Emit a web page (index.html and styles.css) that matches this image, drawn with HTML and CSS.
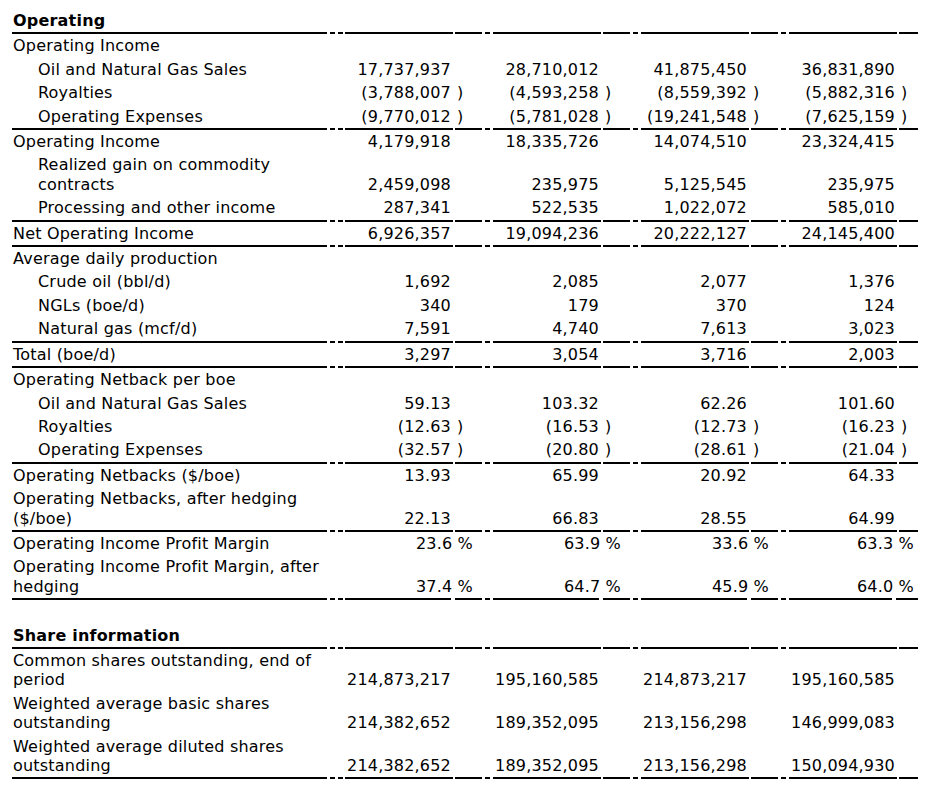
FILE: index.html
```html
<!DOCTYPE html>
<html lang="en">
<head>
<meta charset="utf-8">
<title>Operating summary</title>
<link rel="stylesheet" href="styles.css">
</head>
<body>
<table class="fin">
  <colgroup>
    <col class="c-lbl">
    <col class="c-sp1"><col class="c-num"><col class="c-par">
    <col class="c-sp"><col class="c-num"><col class="c-par">
    <col class="c-sp"><col class="c-num"><col class="c-par">
    <col class="c-sp"><col class="c-num"><col class="c-par4">
  </colgroup>
  <tbody>
    <tr class="rule">
      <td class="lbl head">Operating</td>
      <td class="sp"></td><td class="num"></td><td class="par"></td>
      <td class="sp"></td><td class="num"></td><td class="par"></td>
      <td class="sp"></td><td class="num"></td><td class="par"></td>
      <td class="sp"></td><td class="num"></td><td class="par"></td>
    </tr>
    <tr>
      <td class="lbl">Operating Income</td>
      <td class="sp"></td><td class="num"></td><td class="par"></td>
      <td class="sp"></td><td class="num"></td><td class="par"></td>
      <td class="sp"></td><td class="num"></td><td class="par"></td>
      <td class="sp"></td><td class="num"></td><td class="par"></td>
    </tr>
    <tr>
      <td class="lbl ind">Oil and Natural Gas Sales</td>
      <td class="sp"></td><td class="num">17,737,937</td><td class="par"></td>
      <td class="sp"></td><td class="num">28,710,012</td><td class="par"></td>
      <td class="sp"></td><td class="num">41,875,450</td><td class="par"></td>
      <td class="sp"></td><td class="num">36,831,890</td><td class="par"></td>
    </tr>
    <tr>
      <td class="lbl ind">Royalties</td>
      <td class="sp"></td><td class="num">(3,788,007</td><td class="par">)</td>
      <td class="sp"></td><td class="num">(4,593,258</td><td class="par">)</td>
      <td class="sp"></td><td class="num">(8,559,392</td><td class="par">)</td>
      <td class="sp"></td><td class="num">(5,882,316</td><td class="par">)</td>
    </tr>
    <tr class="rule">
      <td class="lbl ind">Operating Expenses</td>
      <td class="sp"></td><td class="num">(9,770,012</td><td class="par">)</td>
      <td class="sp"></td><td class="num">(5,781,028</td><td class="par">)</td>
      <td class="sp"></td><td class="num">(19,241,548</td><td class="par">)</td>
      <td class="sp"></td><td class="num">(7,625,159</td><td class="par">)</td>
    </tr>
    <tr>
      <td class="lbl">Operating Income</td>
      <td class="sp"></td><td class="num">4,179,918</td><td class="par"></td>
      <td class="sp"></td><td class="num">18,335,726</td><td class="par"></td>
      <td class="sp"></td><td class="num">14,074,510</td><td class="par"></td>
      <td class="sp"></td><td class="num">23,324,415</td><td class="par"></td>
    </tr>
    <tr>
      <td class="lbl ind">Realized gain on commodity contracts</td>
      <td class="sp"></td><td class="num">2,459,098</td><td class="par"></td>
      <td class="sp"></td><td class="num">235,975</td><td class="par"></td>
      <td class="sp"></td><td class="num">5,125,545</td><td class="par"></td>
      <td class="sp"></td><td class="num">235,975</td><td class="par"></td>
    </tr>
    <tr class="rule">
      <td class="lbl ind">Processing and other income</td>
      <td class="sp"></td><td class="num">287,341</td><td class="par"></td>
      <td class="sp"></td><td class="num">522,535</td><td class="par"></td>
      <td class="sp"></td><td class="num">1,022,072</td><td class="par"></td>
      <td class="sp"></td><td class="num">585,010</td><td class="par"></td>
    </tr>
    <tr class="rule">
      <td class="lbl">Net Operating Income</td>
      <td class="sp"></td><td class="num">6,926,357</td><td class="par"></td>
      <td class="sp"></td><td class="num">19,094,236</td><td class="par"></td>
      <td class="sp"></td><td class="num">20,222,127</td><td class="par"></td>
      <td class="sp"></td><td class="num">24,145,400</td><td class="par"></td>
    </tr>
    <tr>
      <td class="lbl">Average daily production</td>
      <td class="sp"></td><td class="num"></td><td class="par"></td>
      <td class="sp"></td><td class="num"></td><td class="par"></td>
      <td class="sp"></td><td class="num"></td><td class="par"></td>
      <td class="sp"></td><td class="num"></td><td class="par"></td>
    </tr>
    <tr>
      <td class="lbl ind">Crude oil (bbl/d)</td>
      <td class="sp"></td><td class="num">1,692</td><td class="par"></td>
      <td class="sp"></td><td class="num">2,085</td><td class="par"></td>
      <td class="sp"></td><td class="num">2,077</td><td class="par"></td>
      <td class="sp"></td><td class="num">1,376</td><td class="par"></td>
    </tr>
    <tr>
      <td class="lbl ind">NGLs (boe/d)</td>
      <td class="sp"></td><td class="num">340</td><td class="par"></td>
      <td class="sp"></td><td class="num">179</td><td class="par"></td>
      <td class="sp"></td><td class="num">370</td><td class="par"></td>
      <td class="sp"></td><td class="num">124</td><td class="par"></td>
    </tr>
    <tr class="rule">
      <td class="lbl ind">Natural gas (mcf/d)</td>
      <td class="sp"></td><td class="num">7,591</td><td class="par"></td>
      <td class="sp"></td><td class="num">4,740</td><td class="par"></td>
      <td class="sp"></td><td class="num">7,613</td><td class="par"></td>
      <td class="sp"></td><td class="num">3,023</td><td class="par"></td>
    </tr>
    <tr class="rule">
      <td class="lbl">Total (boe/d)</td>
      <td class="sp"></td><td class="num">3,297</td><td class="par"></td>
      <td class="sp"></td><td class="num">3,054</td><td class="par"></td>
      <td class="sp"></td><td class="num">3,716</td><td class="par"></td>
      <td class="sp"></td><td class="num">2,003</td><td class="par"></td>
    </tr>
    <tr>
      <td class="lbl">Operating Netback per boe</td>
      <td class="sp"></td><td class="num"></td><td class="par"></td>
      <td class="sp"></td><td class="num"></td><td class="par"></td>
      <td class="sp"></td><td class="num"></td><td class="par"></td>
      <td class="sp"></td><td class="num"></td><td class="par"></td>
    </tr>
    <tr>
      <td class="lbl ind">Oil and Natural Gas Sales</td>
      <td class="sp"></td><td class="num">59.13</td><td class="par"></td>
      <td class="sp"></td><td class="num">103.32</td><td class="par"></td>
      <td class="sp"></td><td class="num">62.26</td><td class="par"></td>
      <td class="sp"></td><td class="num">101.60</td><td class="par"></td>
    </tr>
    <tr>
      <td class="lbl ind">Royalties</td>
      <td class="sp"></td><td class="num">(12.63</td><td class="par">)</td>
      <td class="sp"></td><td class="num">(16.53</td><td class="par">)</td>
      <td class="sp"></td><td class="num">(12.73</td><td class="par">)</td>
      <td class="sp"></td><td class="num">(16.23</td><td class="par">)</td>
    </tr>
    <tr class="rule">
      <td class="lbl ind">Operating Expenses</td>
      <td class="sp"></td><td class="num">(32.57</td><td class="par">)</td>
      <td class="sp"></td><td class="num">(20.80</td><td class="par">)</td>
      <td class="sp"></td><td class="num">(28.61</td><td class="par">)</td>
      <td class="sp"></td><td class="num">(21.04</td><td class="par">)</td>
    </tr>
    <tr>
      <td class="lbl">Operating Netbacks ($/boe)</td>
      <td class="sp"></td><td class="num">13.93</td><td class="par"></td>
      <td class="sp"></td><td class="num">65.99</td><td class="par"></td>
      <td class="sp"></td><td class="num">20.92</td><td class="par"></td>
      <td class="sp"></td><td class="num">64.33</td><td class="par"></td>
    </tr>
    <tr class="rule">
      <td class="lbl">Operating Netbacks, after hedging ($/boe)</td>
      <td class="sp"></td><td class="num">22.13</td><td class="par"></td>
      <td class="sp"></td><td class="num">66.83</td><td class="par"></td>
      <td class="sp"></td><td class="num">28.55</td><td class="par"></td>
      <td class="sp"></td><td class="num">64.99</td><td class="par"></td>
    </tr>
    <tr>
      <td class="lbl">Operating Income Profit Margin</td>
      <td class="sp"></td><td class="pct" colspan="2">23.6 %</td>
      <td class="sp"></td><td class="pct" colspan="2">63.9 %</td>
      <td class="sp"></td><td class="pct" colspan="2">33.6 %</td>
      <td class="sp"></td><td class="pct" colspan="2">63.3 %</td>
    </tr>
    <tr class="rule">
      <td class="lbl">Operating Income Profit Margin, after hedging</td>
      <td class="sp"></td><td class="pct" colspan="2">37.4 %</td>
      <td class="sp"></td><td class="pct" colspan="2">64.7 %</td>
      <td class="sp"></td><td class="pct" colspan="2">45.9 %</td>
      <td class="sp"></td><td class="pct" colspan="2">64.0 %</td>
    </tr>
    <tr class="blank">
      <td class="lbl">&nbsp;</td>
      <td class="sp"></td><td class="num"></td><td class="par"></td>
      <td class="sp"></td><td class="num"></td><td class="par"></td>
      <td class="sp"></td><td class="num"></td><td class="par"></td>
      <td class="sp"></td><td class="num"></td><td class="par"></td>
    </tr>
    <tr class="rule">
      <td class="lbl head">Share information</td>
      <td class="sp"></td><td class="num"></td><td class="par"></td>
      <td class="sp"></td><td class="num"></td><td class="par"></td>
      <td class="sp"></td><td class="num"></td><td class="par"></td>
      <td class="sp"></td><td class="num"></td><td class="par"></td>
    </tr>
    <tr>
      <td class="lbl">Common shares outstanding, end of period</td>
      <td class="sp"></td><td class="num">214,873,217</td><td class="par"></td>
      <td class="sp"></td><td class="num">195,160,585</td><td class="par"></td>
      <td class="sp"></td><td class="num">214,873,217</td><td class="par"></td>
      <td class="sp"></td><td class="num">195,160,585</td><td class="par"></td>
    </tr>
    <tr>
      <td class="lbl">Weighted average basic shares outstanding</td>
      <td class="sp"></td><td class="num">214,382,652</td><td class="par"></td>
      <td class="sp"></td><td class="num">189,352,095</td><td class="par"></td>
      <td class="sp"></td><td class="num">213,156,298</td><td class="par"></td>
      <td class="sp"></td><td class="num">146,999,083</td><td class="par"></td>
    </tr>
    <tr class="rule">
      <td class="lbl">Weighted average diluted shares outstanding</td>
      <td class="sp"></td><td class="num">214,382,652</td><td class="par"></td>
      <td class="sp"></td><td class="num">189,352,095</td><td class="par"></td>
      <td class="sp"></td><td class="num">213,156,298</td><td class="par"></td>
      <td class="sp"></td><td class="num">150,094,930</td><td class="par"></td>
    </tr>
  </tbody>
</table>
</body>
</html>
```

FILE: styles.css
```css
* {
  box-sizing: border-box;
}

html, body {
  background: #ffffff;
}

body {
  margin: 9px 0 0 12px;
  font-family: "DejaVu Sans", Verdana, sans-serif;
  font-size: 16px;
  letter-spacing: 0.2px;
  color: #000000;
}

.fin {
  border-collapse: collapse;
  table-layout: fixed;
  width: 906px;
}

.c-lbl { width: 310px; }
.c-sp1 { width: 23px; }
.c-sp { width: 16px; }
.c-num { width: 108px; }
.c-par { width: 24px; }
.c-par4 { width: 21px; }

.fin td {
  padding: 2px 0;
  line-height: 19.4px;
  vertical-align: bottom;
  white-space: nowrap;
}

.fin td.lbl {
  white-space: normal;
  padding-left: 1px;
  padding-right: 0;
}

.fin td.ind {
  padding-left: 26px;
}

.fin td.head {
  font-weight: bold;
}

.fin td.num {
  text-align: right;
  padding-right: 2px;
}

.fin td.par {
  padding-left: 4px;
}

.fin td.pct {
  text-align: right;
  padding-right: 4px;
}

.fin tr.rule td {
  padding-bottom: 4px;
  background-image: linear-gradient(#000000, #000000);
  background-repeat: no-repeat;
  background-position: left bottom;
  background-size: 100% 2px;
}

.fin tr.rule td.sp {
  background-image: repeating-linear-gradient(to right, #000000 0 5px, transparent 5px 8px);
}

.fin tr.rule td.par {
  background-position: right bottom;
  background-size: calc(100% - 2px) 2px;
}

.fin tr.rule td.pct {
  background-image: linear-gradient(#000000, #000000), linear-gradient(#000000, #000000);
  background-position: left bottom, right bottom;
  background-size: calc(100% - 26px) 2px, 22px 2px;
}
```
